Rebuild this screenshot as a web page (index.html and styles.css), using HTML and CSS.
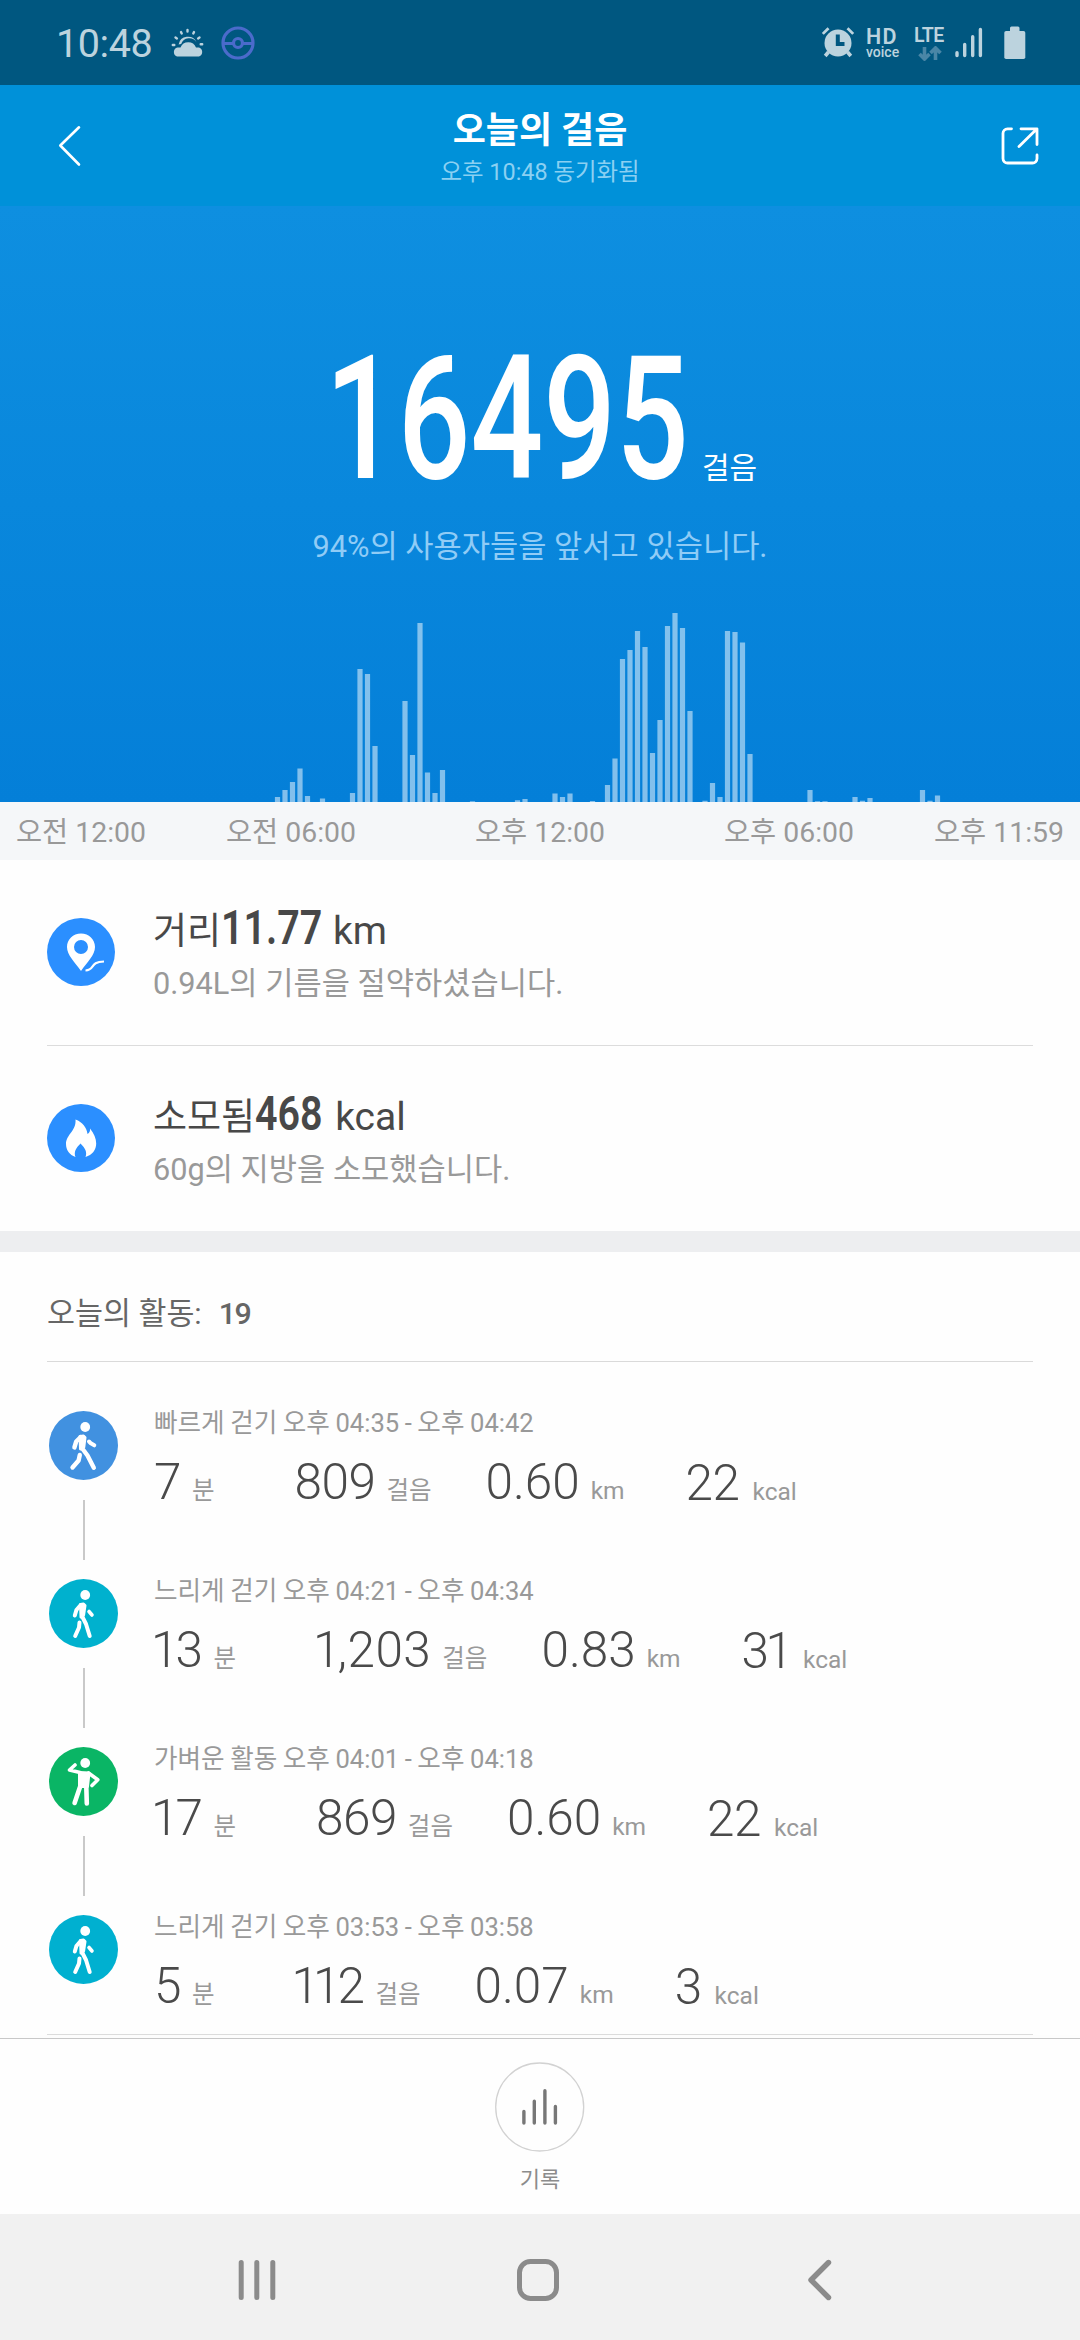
FILE: index.html
```
<!DOCTYPE html>
<html lang="ko">
<head>
<meta charset="utf-8">
<title>오늘의 걸음</title>
<link rel="stylesheet" href="styles.css">
</head>
<body>
<div class="screen">
  <div class="statusbar">
    <span class="clock">10:48</span>
    <svg class="st-weather" width="34" height="30" viewBox="0 0 34 30" fill="currentColor"><path d="M7.600 16.500 A9.500 9.500 0 0 1 25.500 14.200 A8.500 8.500 0 0 0 10.200 16 Z"/><path d="M6 28.500 A4.700 4.700 0 0 1 6.500 19.500 Q8.500 19.300 9.500 19.500 A8.300 8.300 0 0 1 25 19.500 Q26.500 19.300 28 19.600 A4.700 4.700 0 0 1 28 28.500 Z"/><g stroke="currentColor" stroke-width="2.400" stroke-linecap="round"><path d="M16.500 2v1.600M10 4l.7 1.500M23 4l-.7 1.500M4.500 9.500l1.400.9M28.500 9.500l-1.400.9M1.800 17h1.500M29.700 16.200h1.500"/></g></svg>
    <svg class="st-ball" width="34" height="34" viewBox="0 0 34 34" fill="none" stroke="#4b6bcb" stroke-width="3.200"><circle cx="17" cy="17" r="15"/><circle cx="17" cy="17" r="4.500"/><path d="M2 17.500h10.500M21.500 17.500H32"/></svg>
    <div class="status-right">
      <svg width="34" height="32" viewBox="0 0 34 32" fill="currentColor"><circle cx="17" cy="17" r="13.500"/><path d="M0.800 7 6.500 1.200l2 2L2.800 8.800zM33.200 7 27.500 1.200l-2 2 5.700 5.600z"/><path stroke="currentColor" stroke-width="3.600" d="m7.500 26-3.300 4M26.500 26l3.300 4"/><path d="M16.800 8.500V18h6.700" fill="none" stroke="#005780" stroke-width="4"/></svg>
      <div class="hd"><b>HD</b><span>voice</span></div>
      <div class="lte"><b>LTE</b><svg width="24" height="15" viewBox="0 0 24 15" fill="none" stroke="#4a86a6" stroke-width="3.600"><path d="M6.500 1v10M1.500 8l5 5 5-5M17.500 14V4M12.500 7l5-5 5 5"/></svg></div>
      <svg class="signal" width="28" height="32" viewBox="0 0 28 32" stroke="currentColor" stroke-width="3.400" stroke-linecap="round"><path d="M2 26.800v2.700M9.700 18.500v11M17.700 10.700v18.800M25.400 3.500v26"/></svg>
      <svg class="battery" width="22" height="34" viewBox="0 0 22 34" fill="currentColor"><rect x="6" y="0.500" width="9.500" height="8" rx="1.500"/><rect x="0.300" y="5" width="21" height="28" rx="1.800"/></svg>
    </div>
  </div>

  <header class="header">
    <svg class="back" width="24" height="42" viewBox="0 0 24 42" fill="none" stroke="#fff" stroke-width="2.600" stroke-linecap="round" stroke-linejoin="round"><path d="M21 2.300 2.300 20.500 21 39.500"/></svg>
    <div class="header-text">
      <h1>오늘의 걸음</h1>
      <p>오후 10:48 동기화됨</p>
    </div>
    <svg class="share" width="38" height="38" viewBox="0 0 38 38" fill="none" stroke="#fff" stroke-width="2.800" stroke-linecap="round" stroke-linejoin="round"><path d="M10.500 1.800H6.500a4.500 4.500 0 0 0-4.500 4.500V31.500a4.500 4.500 0 0 0 4.500 4.500H31.500a4.500 4.500 0 0 0 4.500-4.500V28M20 1.800H36V17.500M35.500 2.300 18 19.500"/></svg>
  </header>

  <section class="hero">
    <div class="steps"><span class="steps-number">16495</span><span class="steps-unit">걸음</span></div>
    <p class="rank">94%의 사용자들을 앞서고 있습니다.</p>
    <svg class="chart" width="1080" height="190" viewBox="0 0 1080 190" stroke="#fff" stroke-opacity=".5" stroke-width="5.200"><path d="M277.500 190v-5M285 190v-12M292.500 190v-20M300 190v-33.500M307.500 190v-6M322.500 190v-3.500M352.500 190v-9M360 190v-133M367.500 190v-128M375 190v-56M405 190v-101M412.500 190v-47M420 190v-179M427.500 190v-29.500M435 190v-9M442.500 190v-32M472.500 190v-.8M517.500 190v-1.700M525 190v-3M555 190v-8.500M562.500 190v-5M570 190v-8.500M592.500 190v-1M607.500 190v-17M615 190v-43.500M622.500 190v-143M630 190v-152M637.500 190v-171M645 190v-155M652.500 190v-49M660 190v-82M667.500 190v-176M675 190v-189M682.500 190v-174M690 190v-91M705 190v-1.300M712.500 190v-19M720 190v-5M727.500 190v-171M735 190v-170M742.500 190v-159.500M750 190v-48M810 190v-12M817.500 190v-.7M825 190v-.7M855 190v-5M862.500 190v-1.300M870 190v-4M922.500 190v-12M930 190v-1.300M937.500 190v-6.500"/></svg>
  </section>
  <div class="axis"><span>오전 12:00</span><span>오전 06:00</span><span>오후 12:00</span><span>오후 06:00</span><span>오후 11:59</span></div>

  <section class="summary">
    <div class="info">
      <svg width="68" height="68" viewBox="0 0 68 68"><circle cx="34" cy="34" r="34" fill="#2b8fff"/><path fill="#fff" fill-rule="evenodd" d="M34 15.500c-8 0-14 6-14 13.500 0 8.500 8 15 14 24 6-9 14-15.500 14-24 0-7.500-6-13.500-14-13.500zm0 6.500a7 7 0 1 1 0 14 7 7 0 0 1 0-14z"/><path fill="none" stroke="#fff" stroke-width="2.200" d="M38.500 52.500c10-.5 3.500-8.500 18.500-9"/></svg>
      <div class="info-text">
        <p class="info-main">거리<b class="value value-distance">11.77</b><span>km</span></p>
        <p class="info-sub">0.94L의 기름을 절약하셨습니다.</p>
      </div>
    </div>
    <div class="info">
      <svg width="68" height="68" viewBox="0 0 68 68"><circle cx="34" cy="34" r="34" fill="#2b8fff"/><path fill="#fff" d="M28.500 15.500c7 2.500 11 8 12 14.500 2-1 2.800-3 2.500-5.500 4 5 6.200 10 6.200 15 0 6.500-4 11.500-10.700 13.500 2-5-.5-9-5-13.500-4.500 4.500-7 8.500-5 13.500-6-2-9.500-7-9.500-13 0-9.500 10.500-13 9.500-24.500z"/></svg>
      <div class="info-text">
        <p class="info-main">소모됨<b class="value value-energy">468</b><span>kcal</span></p>
        <p class="info-sub">60g의 지방을 소모했습니다.</p>
      </div>
    </div>
  </section>

  <section class="activities">
    <h2>오늘의 활동:<b>19</b></h2>
    <div class="item">
      <div class="rail">
        <svg width="69" height="69" viewBox="0 0 69 69" fill="none" stroke="#fff" stroke-linecap="round" stroke-linejoin="round"><circle cx="34.500" cy="34.500" r="34.500" fill="#4191e0" stroke="none"/><circle cx="36.200" cy="16" r="4.900" fill="#fff" stroke="none"/><path fill="#fff" stroke-width="3" d="M31 25.500 34.500 25 36 26.500 34.800 36 31.500 38z"/><path stroke-width="4.400" d="M31.500 26.200 27.200 30.500 25.400 36.500M33.300 37.500 38.500 44.500 44.800 56.800M30.800 44 29.600 49.500 23.500 56.500"/><path stroke-width="4" d="m40 30.500 1.800 1.800 3.500 2"/></svg>
        <i class="link"></i>
      </div>
      <div class="detail">
        <p class="when">빠르게 걷기 오후 04:35 - 오후 04:42</p>
        <div class="metrics"><span class="time"><b>7</b>분</span><span class="walk"><b>809</b>걸음</span><span class="dist"><b>0.60</b>km</span><span class="kcal"><b>22</b>kcal</span></div>
      </div>
    </div>
    <div class="item">
      <div class="rail">
        <svg width="69" height="69" viewBox="0 0 69 69" fill="none" stroke="#fff" stroke-linecap="round" stroke-linejoin="round"><circle cx="34.500" cy="34.500" r="34.500" fill="#00b1ce" stroke="none"/><circle cx="36.200" cy="16" r="4.900" fill="#fff" stroke="none"/><path fill="#fff" stroke-width="3" d="M31.500 25.500 34.500 25 36 26.500 34.600 36 32 38z"/><path stroke-width="4" d="M31.500 26.200 27.400 31 25.800 36.500M33.200 37.500 37 45 40.700 57M30.500 43.500 30 48.500 26.200 57"/><path stroke-width="3.600" d="m40 32.500 3 3.500"/></svg>
        <i class="link"></i>
      </div>
      <div class="detail">
        <p class="when">느리게 걷기 오후 04:21 - 오후 04:34</p>
        <div class="metrics"><span class="time"><b><i>1</i>3</b>분</span><span class="walk"><b class="grouped"><i>1</i>,203</b>걸음</span><span class="dist"><b>0.83</b>km</span><span class="kcal"><b>3<i>1</i></b>kcal</span></div>
      </div>
    </div>
    <div class="item">
      <div class="rail">
        <svg width="69" height="69" viewBox="0 0 69 69" fill="none" stroke="#fff" stroke-linecap="round" stroke-linejoin="round"><circle cx="34.500" cy="34.500" r="34.500" fill="#0ab565" stroke="none"/><circle cx="36.200" cy="16" r="4.900" fill="#fff" stroke="none"/><path fill="#fff" stroke-width="3" d="M30.500 25.500 40 26 38.500 39.500 30.500 39.500z"/><path stroke-width="3.600" d="M26 18 20.500 23 31 25.500M39.500 26 48.800 32.800 43 38.500"/><path stroke-width="4.600" d="M31 40 25.600 56M37.300 40 37.800 56.500"/></svg>
        <i class="link"></i>
      </div>
      <div class="detail">
        <p class="when">가벼운 활동 오후 04:01 - 오후 04:18</p>
        <div class="metrics"><span class="time"><b><i>1</i>7</b>분</span><span class="walk"><b>869</b>걸음</span><span class="dist"><b>0.60</b>km</span><span class="kcal"><b>22</b>kcal</span></div>
      </div>
    </div>
    <div class="item item-last">
      <div class="rail">
        <svg width="69" height="69" viewBox="0 0 69 69" fill="none" stroke="#fff" stroke-linecap="round" stroke-linejoin="round"><circle cx="34.500" cy="34.500" r="34.500" fill="#00b0d0" stroke="none"/><circle cx="36.200" cy="16" r="4.900" fill="#fff" stroke="none"/><path fill="#fff" stroke-width="3" d="M31.500 25.500 34.500 25 36 26.500 34.600 36 32 38z"/><path stroke-width="4" d="M31.500 26.200 27.400 31 25.800 36.500M33.200 37.500 37 45 40.700 57M30.500 43.500 30 48.500 26.200 57"/><path stroke-width="3.600" d="m40 32.500 3 3.500"/></svg>
      </div>
      <div class="detail">
        <p class="when">느리게 걷기 오후 03:53 - 오후 03:58</p>
        <div class="metrics"><span class="time"><b>5</b>분</span><span class="walk"><b><i>1</i><i>1</i>2</b>걸음</span><span class="dist"><b>0.07</b>km</span><span class="kcal"><b>3</b>kcal</span></div>
      </div>
    </div>
  </section>

  <footer class="footer">
    <svg width="90" height="90" viewBox="0 0 90 90" fill="none" stroke-linecap="round"><circle cx="44.700" cy="45" r="44" stroke="#d2d2d2" stroke-width="1.300"/><path stroke="#777" stroke-width="3.400" d="M28.900 49.500v11.600M39.300 39.200v21.900M49.900 28.700v32.400M60.400 44.500v16.600"/></svg>
    <span>기록</span>
  </footer>

  <nav class="nav">
    <svg width="680" height="126" viewBox="0 0 680 126" fill="none" stroke="#8b8b8b" stroke-width="5" stroke-linecap="round"><path d="M41.200 48.500v35M56.800 48.500v35M72.800 48.500v35"/><rect x="319.500" y="47.500" width="37" height="37" rx="11"/><path stroke-width="5.400" stroke-linejoin="round" d="M628.500 48.500 611 66l17.500 17.500"/></svg>
  </nav>
</div>
</body>
</html>
```
FILE: styles.css
```
* { box-sizing: border-box; margin: 0; padding: 0; }

body {
  width: 1080px;
  height: 2340px;
  background: #fdfdfd;
  font-family: Roboto, "Noto Sans CJK KR", sans-serif;
  color: #4a4a4a;
  overflow: hidden;
}

svg { display: block; flex: none; }
.screen { display: flex; flex-direction: column; height: 2340px; }

.statusbar {
  height: 85px;
  flex: none;
  display: flex;
  align-items: flex-start;
  background: #005780;
  color: #bcd3de;
  padding: 0 54px 0 56px;
}
.clock { width: 115px; font-size: 39.5px; line-height: 60px; padding-top: 14px; letter-spacing: -0.4px; }
.st-weather { margin-top: 28px; }
.st-ball { margin: 26px 0 0 16px; }
.status-right { margin-left: auto; display: flex; align-items: flex-start; padding-top: 26px; }
.hd { width: 34px; margin: 0 0 0 11px; display: flex; flex-direction: column; }
.hd b { font: 600 21.5px/21px Roboto, sans-serif; letter-spacing: 1.4px; }
.hd span { font-size: 14px; line-height: 11px; font-weight: 500; }
.lte { width: 32px; margin-left: 14px; }
.lte b { display: block; font: 600 19.5px/19px Roboto, sans-serif; letter-spacing: -0.5px; }
.lte svg { margin: 1px 0 0 4px; }
.signal { margin-left: 9px; }
.battery { margin-left: 21px; }

.header {
  height: 121px;
  flex: none;
  display: flex;
  justify-content: space-between;
  align-items: flex-start;
  background: #0091d9;
  color: #fff;
  padding: 22px 41px 0 58px;
}
.back { margin-top: 18px; }
.share { margin-top: 20px; }
.header-text { text-align: center; margin-right: 3px; }
.header h1 { font-size: 36px; line-height: 48px; font-weight: 600; }
.header p { font-size: 23.400px; line-height: 30px; margin-top: 2px; color: #8bd0f2; }

.hero {
  height: 596px;
  flex: none;
  display: flex;
  flex-direction: column;
  align-items: center;
  background: linear-gradient(#0e8fe0, #047fd8);
  color: #fff;
  padding-top: 126px;
}
.steps { display: flex; align-items: baseline; align-self: flex-start; padding-left: 325px; height: 174px; }
.steps-number {
  width: 377px;
  font-size: 173px;
  line-height: 174px;
  font-weight: 500;
  white-space: nowrap;
  transform: scaleX(.74);
  transform-origin: left;
}
.steps-unit { font-size: 30px; line-height: 40px; }
.rank { margin-top: 21px; font-size: 30.700px; line-height: 40px; color: #90ccf6; }
.chart { margin-top: auto; }

.axis {
  height: 58px;
  flex: none;
  display: grid;
  grid-template-columns: 162px 258px 240px 258px 162px;
  text-align: center;
  background: #f5f7f9;
  color: #999;
  font-size: 28.400px;
  line-height: 58px;
  padding-top: 2px;
}

.summary { background: #fefefe; padding: 0 47px; }
.info { height: 185px; display: flex; align-items: center; padding-bottom: 2px; }
.info + .info { height: 186px; border-top: 1px solid #dcdcdc; }
.info-text { margin: 4px 0 0 38px; white-space: nowrap; }
.info-main { display: flex; align-items: baseline; height: 50px; font-size: 37px; line-height: 50px; color: #484848; }
.info-main span { font-size: 39px; }
.value {
  font-size: 47.500px;
  font-weight: 600;
  transform: scaleX(.83);
  transform-origin: left;
}
.value-distance { width: 112px; }
.value-energy { width: 80px; }
.info-sub { margin-top: 11px; font-size: 30.700px; line-height: 40px; color: #999; }

.activities { flex: none; height: 804px; border-top: 21px solid #edeef0; padding: 0 47px; background: #fefefe; }
.activities h2 {
  height: 110px;
  padding-top: 15px;
  font-size: 30.400px;
  line-height: 93px;
  font-weight: 400;
  color: #666;
  border-bottom: 1px solid #dadada;
  margin-bottom: 45px;
}
.activities h2 b { margin-left: 17px; font-weight: 500; letter-spacing: -1.5px; }
.item { height: 168px; display: flex; }
.item-last { height: 124px; border-bottom: 1px solid #dcdcdc; }
.rail { width: 107px; padding: 4px 0 0 2px; }
.link { display: block; width: 2px; height: 60px; margin: 20px 0 0 34px; background: #c9c9c9; }
.detail { padding-top: 1px; }
.when { font-size: 25.600px; line-height: 30px; word-spacing: -0.8px; color: #999; white-space: nowrap; }
.metrics { display: flex; margin-top: 14px; height: 60px; color: #999; font-size: 24.500px; line-height: 60px; white-space: nowrap; }
.metrics b { font-size: 49.500px; font-weight: 350; color: #4a4a4a; letter-spacing: -0.5px; margin-right: 11px; }
.metrics i { font-style: normal; margin-left: -3px; letter-spacing: -3px; }
.metrics .walk { margin-left: 80px; }
.metrics .grouped { letter-spacing: 0.5px; }
.metrics .dist { margin-left: 54px; }
.metrics .dist b { letter-spacing: 0; }
.metrics .kcal { margin-left: 61px; padding-top: 1px; }
.metrics .kcal b { margin-right: 13px; }

.footer {
  flex: none;
  height: 176px;
  margin-top: auto;
  display: flex;
  flex-direction: column;
  align-items: center;
  border-top: 1px solid #c8c8c8;
  background: #fefefe;
  padding-top: 23px;
}
.footer span { margin-top: 13px; font-size: 22px; line-height: 30px; color: #8c8c8c; }

.nav { height: 126px; flex: none; display: flex; justify-content: center; background: #f1f1f1; }
```
